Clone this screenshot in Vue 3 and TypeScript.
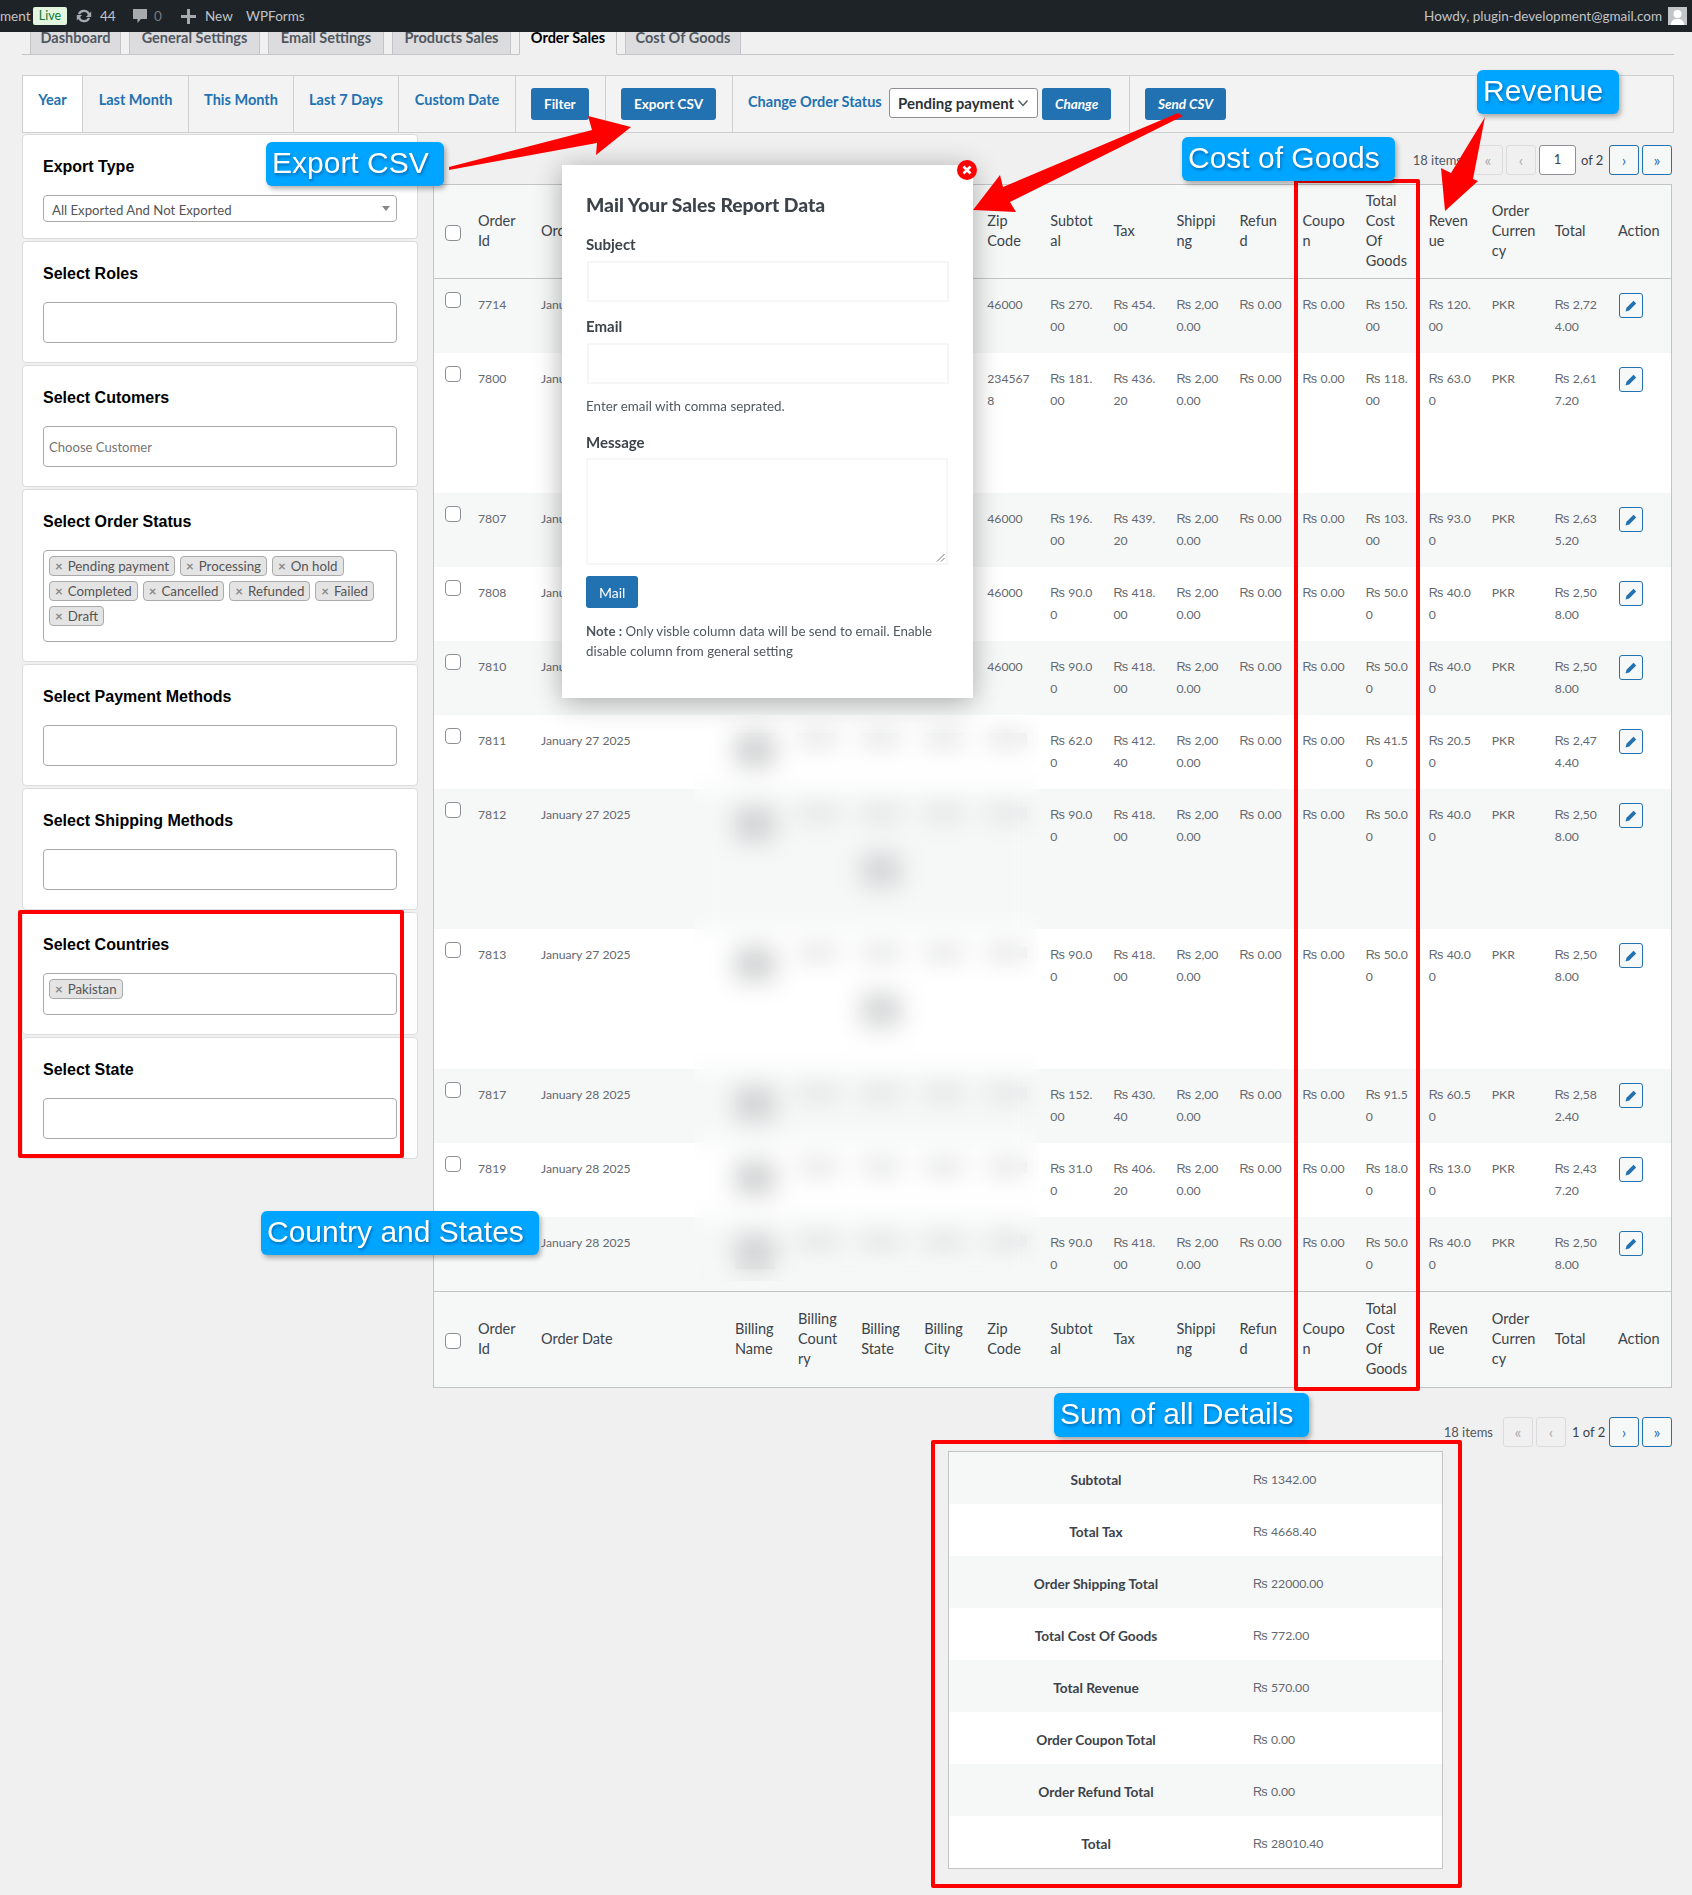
<template>
  <div class="page">
    <header class="adminbar">
      <div class="bar-left">
        <span class="bar-cut">ment</span>
        <span class="live">Live</span>
        <span class="bar-item sync">
          <svg width="18" height="18" viewBox="0 0 20 20" fill="#a7aaad">
            <path d="M10 3a7 7 0 0 1 6.2 3.7L18 5v6h-6l2.3-2.2A4.6 4.6 0 0 0 5.6 8.3L3.2 7.5A7 7 0 0 1 10 3z" />
            <path d="M10 17a7 7 0 0 1-6.2-3.7L2 15V9h6l-2.3 2.2a4.6 4.6 0 0 0 8.7.5l2.4.8A7 7 0 0 1 10 17z" />
          </svg>
          44
        </span>
        <span class="bar-item comments">
          <svg width="16" height="18" viewBox="0 0 16 18" fill="#a7aaad">
            <path d="M1 2h14v10H9l-3.5 4v-4H1z" />
          </svg>
          <span class="dim">0</span>
        </span>
        <span class="bar-item new">
          <svg width="15" height="15" viewBox="0 0 15 15" fill="#a7aaad">
            <path d="M6 0h3v6h6v3H9v6H6V9H0V6h6z" />
          </svg>
          New
        </span>
        <span class="bar-item wpforms">WPForms</span>
      </div>
      <div class="bar-right">
        <span>Howdy, plugin-development@gmail.com</span>
        <span class="avatar">
          <svg width="19" height="18" viewBox="0 0 19 18">
            <rect width="19" height="18" fill="#c3c4c7" />
            <circle cx="9.5" cy="7" r="4" fill="#fff" />
            <path d="M3 18c0-5 3-6 6.500-6s6.500 1 6.500 6z" fill="#fff" />
          </svg>
        </span>
      </div>
    </header>

    <main class="wrap">
      <nav class="tabs">
        <a
          v-for="tab in tabs"
          :key="tab"
          :class="['tab', { 'tab--active': tab === 'Order Sales' }]"
        >{{ tab }}</a>
      </nav>

      <div class="filterbar">
        <a v-for="link in rangeLinks" :key="link" class="range">{{ link }}</a>
        <div class="cell"><button class="btn">Filter</button></div>
        <div class="cell"><button class="btn">Export CSV</button></div>
        <div class="cell status">
          <span class="status-label">Change Order Status</span>
          <div class="status-select">
            Pending payment
            <svg width="12" height="8" viewBox="0 0 12 8" fill="none" stroke="#50575e" stroke-width="1.300">
              <path d="M1.500 1.500 6 6.500l4.500-5" />
            </svg>
          </div>
          <button class="btn btn--italic">Change</button>
        </div>
        <div class="cell cell--last"><button class="btn btn--italic">Send CSV</button></div>
      </div>

      <div class="columns">
        <aside class="sidebar">
          <section v-for="card in cards" :key="card.title" class="card" :class="{ 'card--select': card.select }">
            <h3>{{ card.title }}</h3>
            <div v-if="card.select" class="fake-select">
              {{ card.select }}
              <i class="caret"></i>
            </div>
            <div v-else class="field" :class="{ 'field--chips': card.chips }">
              <span v-if="card.placeholder" class="placeholder">{{ card.placeholder }}</span>
              <span v-for="chip in card.chips" :key="chip" class="chip"><b>×</b>{{ chip }}</span>
            </div>
          </section>
        </aside>

        <section class="content">
          <div class="pager pager--top">
            <span class="count">18 items</span>
            <span class="pg pg--off">«</span>
            <span class="pg pg--off">‹</span>
            <span class="pg-input">1</span>
            <span class="pg-text">of 2</span>
            <span class="pg">›</span>
            <span class="pg">»</span>
          </div>

          <table class="orders">
            <colgroup>
              <col class="col-check" />
              <col class="col-id" />
              <col class="col-date" />
              <col v-for="n in 15" :key="n" />
            </colgroup>
            <thead>
              <tr>
                <th><input type="checkbox" class="check" /></th>
                <th v-for="head in headers" :key="head"><span v-for="part in head.split('|')" :key="part" class="ln">{{ part }}</span></th>
              </tr>
            </thead>
            <tbody>
              <tr v-for="(row, i) in rows" :key="i" :class="{ odd: i % 2 === 0 }">
                <td :class="['td-check', { tall: row.tall }]"><input type="checkbox" class="check" /></td>
                <td>{{ row.id }}</td>
                <td class="nowrap">{{ row.date }}</td>
                <td v-for="c in 4" :key="c">
                  <template v-if="i >= 5">
                    <i class="smudge" :class="{ 'smudge--big': c === 1 }"></i>
                    <i v-if="row.tall && c === 3" class="smudge smudge--low"></i>
                  </template>
                </td>
                <td>
                  <i v-if="i >= 5" class="smudge"></i>
                  <template v-else><span v-for="part in row.zip.split('|')" :key="part" class="ln">{{ part }}</span></template>
                </td>
                <td v-for="(val, k) in amounts(row)" :key="k">
                  <span v-for="(part, p) in val.split('|')" :key="p" class="ln"><span v-if="p === 0" class="rs">₨ </span>{{ part }}</span>
                </td>
                <td class="cur">PKR</td>
                <td><span v-for="(part, p) in row.total.split('|')" :key="p" class="ln"><span v-if="p === 0" class="rs">₨ </span>{{ part }}</span></td>
                <td>
                  <button class="edit">
                    <svg width="12" height="12" viewBox="0 0 12 12" fill="#2271b1">
                      <path d="M8.500.8 11.200 3.500 4.200 10.500.6 11.400l.9-3.600z" />
                    </svg>
                  </button>
                </td>
              </tr>
            </tbody>
            <tfoot>
              <tr>
                <th><input type="checkbox" class="check" /></th>
                <th v-for="head in headers" :key="head"><span v-for="part in head.split('|')" :key="part" class="ln">{{ part }}</span></th>
              </tr>
            </tfoot>
          </table>

          <div class="pager pager--bottom">
            <span class="count count--bottom">18 items</span>
            <span class="pg pg--off">«</span>
            <span class="pg pg--off">‹</span>
            <span class="pg-text pg-text--wide">1 of 2</span>
            <span class="pg">›</span>
            <span class="pg">»</span>
          </div>

          <table class="summary">
            <tbody>
              <tr v-for="(item, i) in summary" :key="item.label" :class="{ odd: i % 2 === 0 }">
                <th>{{ item.label }}</th>
                <td><span class="rs">₨ </span>{{ item.value }}</td>
              </tr>
            </tbody>
          </table>
        </section>
      </div>
    </main>

    <!-- blurred customer columns -->
    <div class="blur-cover"></div>

    <div class="modal">
      <span class="modal-close">
        <svg width="10" height="10" viewBox="0 0 10 10" stroke="#fff" stroke-width="2.600">
          <path d="M1.500 1.500l7 7M8.500 1.500l-7 7" />
        </svg>
      </span>
      <h2>Mail Your Sales Report Data</h2>
      <label>Subject</label>
      <div class="modal-input"></div>
      <label>Email</label>
      <div class="modal-input"></div>
      <p class="modal-help">Enter email with comma seprated.</p>
      <label>Message</label>
      <div class="modal-area">
        <svg width="9" height="9" viewBox="0 0 9 9" stroke="#777" fill="none">
          <path d="M1 8.500 8.500 1M5 8.500 8.500 5" />
        </svg>
      </div>
      <button class="btn btn--mail">Mail</button>
      <p class="modal-note"><b>Note :</b> Only visble column data will be send to email. Enable disable column from general setting</p>
    </div>

    <!-- screenshot annotations -->
    <span class="mark mark--countries"></span>
    <span class="mark mark--cost"></span>
    <span class="mark mark--sum"></span>
    <svg class="arrows" width="1692" height="1895" viewBox="0 0 1692 1895" fill="#f00">
      <polygon points="449,167 592,130 588,116 631,127 596,155 597,143 449,170" />
      <polygon points="1178,113 1183,116 1010,202 1016,212 973,210 1000,175 1003,187" />
      <polygon points="1485,117 1473,179 1478,181 1445,211 1441,168 1451,173" />
    </svg>
    <span class="note note--export">Export CSV</span>
    <span class="note note--revenue">Revenue</span>
    <span class="note note--cost">Cost of Goods</span>
    <span class="note note--country">Country and States</span>
    <span class="note note--sum">Sum of all Details</span>
  </div>
</template>

<script setup lang="ts">
interface Card {
  title: string
  select?: string
  placeholder?: string
  chips?: string[]
}

interface Row {
  id: string
  date: string
  zip: string
  sub: string
  tax: string
  cost: string
  rev: string
  total: string
  tall?: boolean
}

const tabs = ['Dashboard', 'General Settings', 'Email Settings', 'Products Sales', 'Order Sales', 'Cost Of Goods']
const rangeLinks = ['Year', 'Last Month', 'This Month', 'Last 7 Days', 'Custom Date']

const cards: Card[] = [
  { title: 'Export Type', select: 'All Exported And Not Exported' },
  { title: 'Select Roles' },
  { title: 'Select Cutomers', placeholder: 'Choose Customer' },
  {
    title: 'Select Order Status',
    chips: ['Pending payment', 'Processing', 'On hold', 'Completed', 'Cancelled', 'Refunded', 'Failed', 'Draft'],
  },
  { title: 'Select Payment Methods' },
  { title: 'Select Shipping Methods' },
  { title: 'Select Countries', chips: ['Pakistan'] },
  { title: 'Select State' },
]

const headers = [
  'Order|Id', 'Order Date', 'Billing|Name', 'Billing|Count|ry', 'Billing|State', 'Billing|City', 'Zip|Code',
  'Subtot|al', 'Tax', 'Shippi|ng', 'Refun|d', 'Coupo|n', 'Total|Cost|Of|Goods', 'Reven|ue', 'Order|Curren|cy', 'Total', 'Action',
]

const rows: Row[] = [
  { id: '7714', date: 'January 27 2025', zip: '46000', sub: '270.|00', tax: '454.|00', cost: '150.|00', rev: '120.|00', total: '2,72|4.00' },
  { id: '7800', date: 'January 27 2025', zip: '234567|8', sub: '181.|00', tax: '436.|20', cost: '118.|00', rev: '63.0|0', total: '2,61|7.20', tall: true },
  { id: '7807', date: 'January 27 2025', zip: '46000', sub: '196.|00', tax: '439.|20', cost: '103.|00', rev: '93.0|0', total: '2,63|5.20' },
  { id: '7808', date: 'January 27 2025', zip: '46000', sub: '90.0|0', tax: '418.|00', cost: '50.0|0', rev: '40.0|0', total: '2,50|8.00' },
  { id: '7810', date: 'January 27 2025', zip: '46000', sub: '90.0|0', tax: '418.|00', cost: '50.0|0', rev: '40.0|0', total: '2,50|8.00' },
  { id: '7811', date: 'January 27 2025', zip: '46000', sub: '62.0|0', tax: '412.|40', cost: '41.5|0', rev: '20.5|0', total: '2,47|4.40' },
  { id: '7812', date: 'January 27 2025', zip: '46000', sub: '90.0|0', tax: '418.|00', cost: '50.0|0', rev: '40.0|0', total: '2,50|8.00', tall: true },
  { id: '7813', date: 'January 27 2025', zip: '46000', sub: '90.0|0', tax: '418.|00', cost: '50.0|0', rev: '40.0|0', total: '2,50|8.00', tall: true },
  { id: '7817', date: 'January 28 2025', zip: '46000', sub: '152.|00', tax: '430.|40', cost: '91.5|0', rev: '60.5|0', total: '2,58|2.40' },
  { id: '7819', date: 'January 28 2025', zip: '46000', sub: '31.0|0', tax: '406.|20', cost: '18.0|0', rev: '13.0|0', total: '2,43|7.20' },
  // id of this row sits under the "Country and States" label
  { id: '', date: 'January 28 2025', zip: '46000', sub: '90.0|0', tax: '418.|00', cost: '50.0|0', rev: '40.0|0', total: '2,50|8.00' },
]

const summary = [
  { label: 'Subtotal', value: '1342.00' },
  { label: 'Total Tax', value: '4668.40' },
  { label: 'Order Shipping Total', value: '22000.00' },
  { label: 'Total Cost Of Goods', value: '772.00' },
  { label: 'Total Revenue', value: '570.00' },
  { label: 'Order Coupon Total', value: '0.00' },
  { label: 'Order Refund Total', value: '0.00' },
  { label: 'Total', value: '28010.40' },
]

// subtotal → revenue, in table order
const amounts = (row: Row) => [row.sub, row.tax, '2,00|0.00', '0.00', '0.00', row.cost, row.rev]
</script>

<style>
html,
body {
  margin: 0;
  background: #f0f0f1;
}
</style>

<style scoped>
.page {
  position: relative;
  width: 1692px;
  height: 1895px;
  overflow: hidden;
  background: #f0f0f1;
  font-family: Lato, "DejaVu Sans", sans-serif;
  font-size: 13px;
  color: #3c434a;
}

.adminbar {
  position: absolute;
  top: 0;
  left: 0;
  right: 0;
  height: 32px;
  z-index: 5;
  display: flex;
  justify-content: space-between;
  align-items: center;
  background: #1d2327;
  color: #c3c4c7;
  font-size: 13.500px;
}

.bar-left,
.bar-right,
.bar-item {
  display: flex;
  align-items: center;
}

.bar-cut {
  width: 33px;
}

.live {
  width: 34px;
  height: 18px;
  line-height: 18px;
  text-align: center;
  background: #e3f5df;
  border-radius: 2px;
  color: #0a7a34;
  font-size: 12.500px;
}

.sync {
  margin-left: 8px;
  gap: 7px;
  width: 57px;
}

.comments {
  gap: 6px;
  width: 49px;
}

.dim {
  color: #787c82;
}

.new {
  gap: 9px;
  width: 65px;
}

.bar-right {
  gap: 6px;
  padding-right: 5px;
}

.avatar {
  display: flex;
}

.wrap {
  padding: 20px 18px 0 22px;
}

.tabs {
  display: flex;
  height: 34px;
  padding-left: 8px;
  border-bottom: 1px solid #c3c4c7;
}

.tab {
  box-sizing: border-box;
  height: 35px;
  margin-right: 8px;
  padding: 5px 0 0;
  line-height: 24px;
  text-align: center;
  background: #dcdcde;
  border: 1px solid #c3c4c7;
  font-size: 14.500px;
  font-weight: 700;
  color: #50575e;
}

.tab:nth-child(1) { width: 91px; }
.tab:nth-child(2) { width: 131px; }
.tab:nth-child(3) { width: 116px; }
.tab:nth-child(4) { width: 119px; }
.tab:nth-child(5) { width: 98px; }
.tab:nth-child(6) { width: 116px; }

.tab--active {
  background: #f0f0f1;
  border-bottom-color: #f0f0f1;
  color: #000;
}

.filterbar {
  box-sizing: border-box;
  display: grid;
  grid-template-columns: 60px 106px 105px 105px 117px 90px 127px 397px 1fr;
  height: 58px;
  margin-top: 20px;
  background: #f3f3f4;
  border: 1px solid #cfcfd1;
}

.range,
.cell {
  box-sizing: border-box;
  border-right: 1px solid #cfcfd1;
}

.range {
  padding-top: 14px;
  line-height: 20px;
  text-align: center;
  font-size: 14.500px;
  font-weight: 700;
  color: #2271b1;
}

.range:first-child {
  background: #fff;
}

.cell {
  padding: 12px 0 0 15px;
}

.cell--last {
  border-right: 0;
}

.btn {
  display: block;
  height: 32px;
  padding: 0 13px;
  border: 0;
  border-radius: 3px;
  background: #2271b1;
  color: #fff;
  font: 700 13.500px Lato, sans-serif;
}

.btn--italic {
  font-style: italic;
}

.status {
  display: flex;
  align-items: flex-start;
}

.status-label {
  width: 141px;
  padding-top: 5px;
  font-size: 14.500px;
  font-weight: 700;
  color: #2271b1;
  white-space: nowrap;
}

.status-select {
  box-sizing: border-box;
  display: flex;
  align-items: center;
  justify-content: space-between;
  width: 149px;
  height: 30px;
  padding: 0 8px;
  margin-right: 4px;
  background: #fff;
  border: 1px solid #8c8f94;
  border-radius: 3px;
  font-size: 15px;
  font-weight: 700;
  color: #2c3338;
}

.columns {
  display: flex;
  align-items: flex-start;
  gap: 15px;
  margin-top: 1px;
}

.sidebar {
  display: flex;
  flex-direction: column;
  gap: 2px;
  flex: 0 0 396px;
}

.card {
  box-sizing: border-box;
  padding: 22px 20px 19px;
  background: #fff;
  border: 1px solid #dcdcde;
  border-radius: 4px;
}

.card--select {
  padding-bottom: 16px;
}

h3 {
  margin: 0 0 18px;
  font: 700 16px/20px "Liberation Sans", Arial, sans-serif;
  color: #000;
}

.fake-select {
  position: relative;
  box-sizing: border-box;
  height: 27px;
  padding-left: 8px;
  line-height: 28px;
  font-size: 13.200px;
  color: #555;
  border: 1px solid #aaa;
  border-radius: 4px;
}

.caret {
  position: absolute;
  top: 10px;
  right: 6px;
  border: 4px solid transparent;
  border-top: 5px solid #888;
  border-bottom: 0;
}

.field {
  box-sizing: border-box;
  display: flex;
  flex-wrap: wrap;
  align-content: flex-start;
  gap: 5px;
  min-height: 41px;
  padding: 0 5px;
  border: 1px solid #aaa;
  border-radius: 4px;
}

.field--chips {
  padding: 5px 5px 15px;
}

.placeholder {
  padding-top: 2px;
  line-height: 37px;
  font-size: 13.100px;
  color: #757575;
}

.chip {
  box-sizing: border-box;
  height: 20px;
  padding: 0 5px;
  line-height: 18px;
  font-size: 13.300px;
  color: #555;
  background: #e4e4e4;
  border: 1px solid #aaa;
  border-radius: 4px;
}

.chip b {
  margin-right: 5px;
  font-weight: 700;
  color: #888;
}

.content {
  flex: 1;
  min-width: 0;
}

.pager {
  display: flex;
  align-items: center;
  justify-content: flex-end;
  gap: 3px;
  width: 1239px;
  height: 30px;
  font-size: 13px;
}

.pager--top {
  margin-top: 11px;
}

.pager--bottom {
  margin-top: 29px;
}

.count {
  margin-right: 8px;
  color: #50575e;
}

.count--bottom {
  margin-right: 7px;
}

.pg,
.pg-input {
  box-sizing: border-box;
  height: 30px;
  line-height: 27px;
  text-align: center;
  border-radius: 3px;
}

.pg {
  width: 30px;
  font-size: 16px;
  color: #2271b1;
  background: #f6f7f7;
  border: 1px solid #2271b1;
}

.pg--off {
  color: #a7aaad;
  background: #f0f0f1;
  border-color: #dcdcde;
}

.pg-input {
  width: 37px;
  background: #fff;
  border: 1px solid #8c8f94;
}

.pg-text {
  width: 25px;
  margin-left: 2px;
  white-space: nowrap;
}

.pg-text--wide {
  width: 34px;
  margin-left: 3px;
}

.orders {
  box-sizing: border-box;
  width: 1239px;
  margin-top: 9px;
  table-layout: fixed;
  border-collapse: separate;
  border-spacing: 0;
  background: #fff;
  border: 1px solid #c3c4c7;
}

.col-check { width: 34px; }
.col-id { width: 63px; }
.col-date { width: 194px; }

.orders th {
  box-sizing: border-box;
  height: 94px;
  padding: 0 0 0 10px;
  text-align: left;
  font-size: 14.500px;
  font-weight: 400;
  line-height: 20px;
  color: #3c434a;
  background: #f6f7f7;
  white-space: nowrap;
}

.orders thead th {
  padding-bottom: 2px;
  border-bottom: 1px solid #c3c4c7;
}

.orders tfoot th {
  height: 96px;
  padding-bottom: 2px;
  border-top: 1px solid #c3c4c7;
}

.orders th:first-child {
  padding-left: 11px;
  padding-top: 3px;
  padding-bottom: 0;
}

.orders td {
  box-sizing: border-box;
  height: 74px;
  padding: 15px 0 0 10px;
  vertical-align: top;
  font-size: 12.200px;
  line-height: 22px;
  color: #646970;
  white-space: nowrap;
}

.orders td.tall {
  height: 140px;
}

.orders td.td-check {
  padding: 13px 0 0 11px;
}

.odd td,
.odd th {
  background: #f6f7f7;
}

.ln {
  display: block;
}

.rs {
  font-family: "Liberation Sans", Arial, sans-serif;
  font-size: 12.500px;
}

.check {
  appearance: none;
  display: block;
  box-sizing: border-box;
  width: 16px;
  height: 16px;
  margin: 0;
  background: #fff;
  border: 1px solid #8c8f94;
  border-radius: 4px;
}

.nowrap {
  white-space: nowrap;
}

.edit {
  display: flex;
  align-items: center;
  justify-content: center;
  box-sizing: border-box;
  width: 24px;
  height: 25px;
  margin: -1px 0 0 1px;
  padding: 0;
  background: #f6f7f7;
  border: 1px solid #2271b1;
  border-radius: 3px;
}

.smudge {
  display: block;
  width: 40px;
  height: 12px;
  margin-top: 3px;
  background: #d8d9da;
}

.smudge--big {
  height: 34px;
  background: #d0d1d2;
}

.smudge--low {
  height: 34px;
  margin-top: 34px;
  background: #d4d5d6;
}

.blur-cover {
  position: absolute;
  left: 694px;
  top: 716px;
  width: 345px;
  height: 565px;
  backdrop-filter: blur(12px);
  z-index: 2;
}

.summary {
  box-sizing: border-box;
  width: 495px;
  margin: 4px 0 0 515px;
  table-layout: fixed;
  border-collapse: separate;
  border-spacing: 0;
  background: #fff;
  border: 1px solid #c3c4c7;
}

.summary th,
.summary td {
  box-sizing: border-box;
  height: 52px;
  padding: 2px 0 0;
}

.summary th {
  width: 294px;
  font-size: 13.700px;
  font-weight: 700;
  color: #3c434a;
}

.summary td {
  padding-left: 10px;
  font-size: 12.200px;
  color: #646970;
}

.modal {
  position: absolute;
  left: 562px;
  top: 165px;
  box-sizing: border-box;
  width: 411px;
  height: 533px;
  padding: 28px 24px 0;
  background: #fff;
  box-shadow: 0 4px 26px rgba(0, 0, 0, 0.32);
  z-index: 3;
}

.modal h2 {
  margin: 0 0 17px;
  font-size: 19.300px;
  line-height: 24px;
  font-weight: 900;
  color: #3c434a;
}

.modal label {
  display: block;
  height: 20px;
  line-height: 20px;
  font-size: 15px;
  font-weight: 700;
  color: #3c434a;
}

.modal-close {
  position: absolute;
  right: -4px;
  top: -5px;
  display: flex;
  align-items: center;
  justify-content: center;
  width: 20px;
  height: 20px;
  border-radius: 50%;
  background: #f00;
}

.modal-input {
  box-sizing: border-box;
  width: 362px;
  height: 41px;
  margin: 7px 0 14px 1px;
  border: 2px solid #f6f6f6;
}

.modal-help {
  margin: -2px 0 16px;
  line-height: 20px;
  font-size: 13.400px;
  color: #50575e;
}

.modal-area {
  position: relative;
  box-sizing: border-box;
  width: 362px;
  height: 107px;
  margin: 6px 0 11px;
  border: 2px solid #f6f6f6;
}

.modal-area svg {
  position: absolute;
  right: 1px;
  bottom: 1px;
}

.btn--mail {
  height: 32px;
  padding: 0 13px;
  font-weight: 400;
  font-size: 14px;
}

.modal-note {
  margin: 13px 0 0;
  font-size: 13.300px;
  line-height: 20px;
  color: #50575e;
}

.mark {
  position: absolute;
  box-sizing: border-box;
  border: 4px solid #f00;
  border-radius: 2px;
  z-index: 4;
}

.mark--countries {
  left: 18px;
  top: 910px;
  width: 386px;
  height: 248px;
}

.mark--cost {
  left: 1294px;
  top: 179px;
  width: 126px;
  height: 1212px;
}

.mark--sum {
  left: 931px;
  top: 1440px;
  width: 531px;
  height: 448px;
}

.arrows {
  position: absolute;
  left: 0;
  top: 0;
  z-index: 4;
  pointer-events: none;
}

.note {
  position: absolute;
  box-sizing: border-box;
  height: 44px;
  padding-left: 6px;
  line-height: 41px;
  background: #00a5ff;
  border-radius: 6px;
  box-shadow: 2px 3px 5px rgba(0, 0, 0, 0.3);
  font-family: "Liberation Sans", Arial, sans-serif;
  font-size: 30px;
  color: #fff;
  text-shadow: 1px 2px 3px rgba(0, 60, 120, 0.55);
  white-space: nowrap;
  z-index: 4;
}

.note--export { left: 266px; top: 142px; width: 178px; }
.note--revenue { left: 1477px; top: 70px; width: 142px; }
.note--cost { left: 1182px; top: 137px; width: 213px; }
.note--country { left: 261px; top: 1211px; width: 278px; }
.note--sum { left: 1054px; top: 1393px; width: 255px; }
</style>
